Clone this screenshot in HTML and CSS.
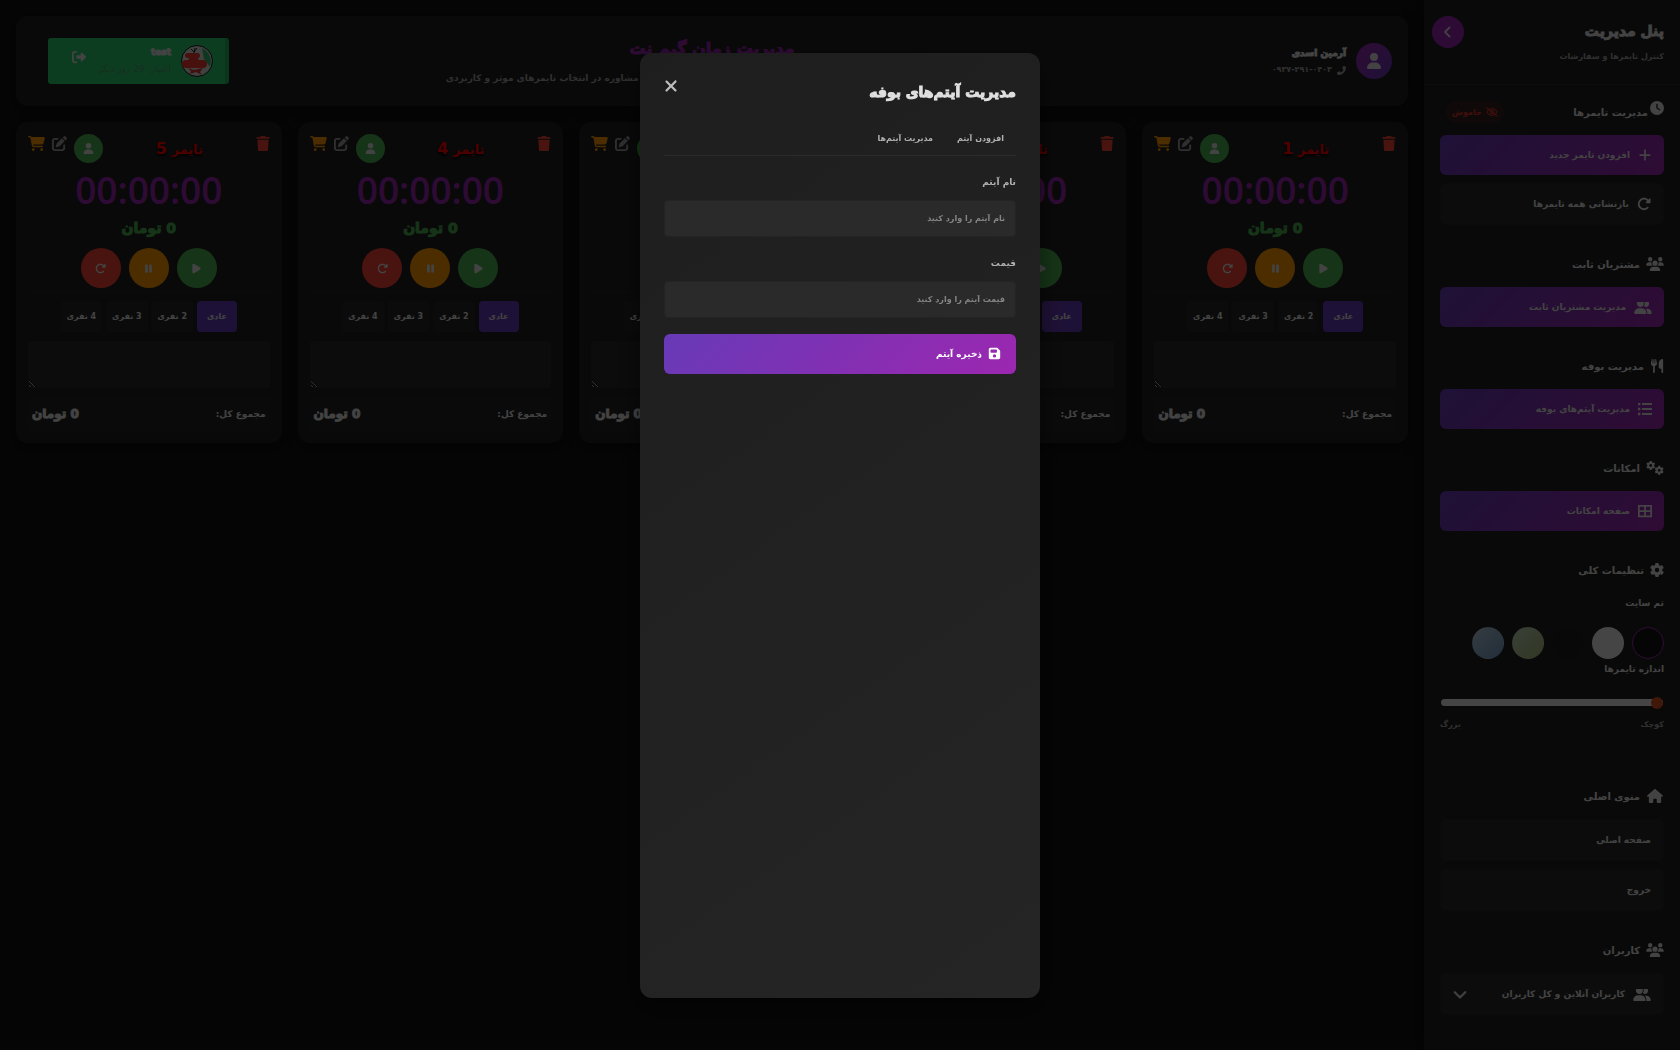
FILE: index.html
```html
<!DOCTYPE html>
<html lang="fa" dir="rtl">
<head>
    <meta charset="UTF-8">
    <meta name="viewport" content="width=device-width, initial-scale=1.0">
    <title>مدیریت زمان گیم نت</title>
    <link rel="stylesheet" href="styles.css">
</head>
<body>
    <svg class="sprite" aria-hidden="true">
        <symbol id="i-plus" viewBox="0 0 448 512"><path d="M256 80c0-17.7-14.3-32-32-32s-32 14.3-32 32V224H48c-17.7 0-32 14.3-32 32s14.3 32 32 32H192V432c0 17.7 14.3 32 32 32s32-14.3 32-32V288H400c17.7 0 32-14.3 32-32s-14.3-32-32-32H256V80z"/></symbol>
        <symbol id="i-trash" viewBox="0 0 448 512"><path d="M135.2 17.7L128 32H32C14.3 32 0 46.3 0 64S14.3 96 32 96H416c17.7 0 32-14.3 32-32s-14.3-32-32-32H320l-7.2-14.3C307.4 6.8 296.3 0 284.2 0H163.8c-12.1 0-23.2 6.8-28.6 17.7zM416 128H32L53.2 467c1.6 25.3 22.6 45 47.9 45H346.9c25.3 0 46.3-19.7 47.9-45L416 128z"/></symbol>
        <symbol id="i-cart" viewBox="0 0 576 512"><path d="M0 24C0 10.7 10.7 0 24 0H69.5c22 0 41.5 12.8 50.6 32h411c26.3 0 45.5 25 38.6 50.4l-41 152.3c-8.5 31.4-37 53.3-69.5 53.3H170.7l5.4 28.5c2.2 11.3 12.1 19.5 23.6 19.5H488c13.3 0 24 10.7 24 24s-10.7 24-24 24H199.7c-34.6 0-64.3-24.6-70.7-58.5L77.4 54.5c-.7-3.8-4-6.5-7.9-6.5H24C10.7 48 0 37.3 0 24zM128 464a48 48 0 1 1 96 0 48 48 0 1 1 -96 0zm336-48a48 48 0 1 1 0 96 48 48 0 1 1 0-96z"/></symbol>
        <symbol id="i-user" viewBox="0 0 448 512"><path d="M224 256A128 128 0 1 0 224 0a128 128 0 1 0 0 256zm-45.7 48C79.8 304 0 383.8 0 482.3C0 498.7 13.3 512 29.7 512H418.3c16.4 0 29.7-13.3 29.7-29.7C448 383.8 368.2 304 269.7 304H178.3z"/></symbol>
        <symbol id="i-edit" viewBox="0 0 512 512"><path d="M471.6 21.7c-21.9-21.9-57.3-21.9-79.2 0L362.3 51.7l97.9 97.9 30.1-30.1c21.9-21.9 21.9-57.3 0-79.2L471.6 21.7zm-299.2 220c-6.1 6.1-10.8 13.6-13.5 21.9l-29.6 88.8c-2.9 8.6-.6 18.1 5.8 24.6s15.9 8.7 24.6 5.8l88.8-29.6c8.2-2.7 15.7-7.4 21.9-13.5L437.7 172.3 339.7 74.3 172.4 241.7zM96 64C43 64 0 107 0 160V416c0 53 43 96 96 96H352c53 0 96-43 96-96V320c0-17.7-14.3-32-32-32s-32 14.3-32 32v96c0 17.7-14.3 32-32 32H96c-17.7 0-32-14.3-32-32V160c0-17.7 14.3-32 32-32h96c17.7 0 32-14.3 32-32s-14.3-32-32-32H96z"/></symbol>
        <symbol id="i-play" viewBox="0 0 384 512"><path d="M73 39c-14.8-9.1-33.4-9.4-48.5-.9S0 62.6 0 80V432c0 17.4 9.4 33.4 24.5 41.9s33.7 8.1 48.5-.9L361 297c14.3-8.7 23-24.2 23-41s-8.7-32.2-23-41L73 39z"/></symbol>
        <symbol id="i-pause" viewBox="0 0 320 512"><path d="M48 64C21.5 64 0 85.5 0 112V400c0 26.5 21.5 48 48 48H80c26.5 0 48-21.5 48-48V112c0-26.5-21.5-48-48-48H48zm192 0c-26.5 0-48 21.5-48 48V400c0 26.5 21.5 48 48 48h32c26.5 0 48-21.5 48-48V112c0-26.5-21.5-48-48-48H240z"/></symbol>
        <symbol id="i-redo" viewBox="0 0 512 512"><path d="M463.5 224H472c13.3 0 24-10.7 24-24V72c0-9.7-5.8-18.5-14.8-22.2s-19.3-1.7-26.2 5.2L413.4 96.6c-87.6-86.5-228.7-86.2-315.8 1c-87.5 87.5-87.5 229.3 0 316.8s229.3 87.5 316.8 0c12.5-12.5 12.5-32.8 0-45.3s-32.8-12.5-45.3 0c-62.5 62.5-163.8 62.5-226.3 0s-62.5-163.8 0-226.3c62.2-62.2 162.7-62.5 225.3-1L327 183c-6.9 6.9-8.9 17.2-5.2 26.2s12.5 14.8 22.2 14.8H463.5z"/></symbol>
        <symbol id="i-clock" viewBox="0 0 512 512"><path d="M256 0a256 256 0 1 1 0 512A256 256 0 1 1 256 0zM232 120V256c0 8 4 15.5 10.7 20l96 64c11 7.4 25.9 4.4 33.3-6.7s4.4-25.9-6.7-33.3L280 243.2V120c0-13.3-10.7-24-24-24s-24 10.7-24 24z"/></symbol>
        <symbol id="i-close" viewBox="0 0 384 512"><path d="M342.6 150.6c12.5-12.5 12.5-32.8 0-45.3s-32.8-12.5-45.3 0L192 210.7 86.6 105.4c-12.5-12.5-32.8-12.5-45.3 0s-12.5 32.8 0 45.3L146.7 256 41.4 361.4c-12.5 12.5-12.5 32.8 0 45.3s32.8 12.5 45.3 0L192 301.3 297.4 406.6c12.5 12.5 32.8 12.5 45.3 0s12.5-32.8 0-45.3L237.3 256 342.6 150.6z"/></symbol>
        <symbol id="i-left" viewBox="0 0 320 512"><path d="M9.4 233.4c-12.5 12.5-12.5 32.8 0 45.3l192 192c12.5 12.5 32.8 12.5 45.3 0s12.5-32.8 0-45.3L77.3 256 246.6 86.6c12.5-12.5 12.5-32.8 0-45.3s-32.8-12.5-45.3 0l-192 192z" stroke="currentColor" stroke-width="20"/></symbol>
        <symbol id="i-down" viewBox="0 0 512 512"><path d="M233.4 406.6c12.5 12.5 32.8 12.5 45.3 0l192-192c12.5-12.5 12.5-32.8 0-45.3s-32.8-12.5-45.3 0L256 338.7 86.6 169.4c-12.5-12.5-32.8-12.5-45.3 0s-12.5 32.8 0 45.3l192 192z" stroke="currentColor" stroke-width="20"/></symbol>
        <symbol id="i-users" viewBox="0 0 640 512"><path d="M144 0a80 80 0 1 1 0 160A80 80 0 1 1 144 0zM512 0a80 80 0 1 1 0 160A80 80 0 1 1 512 0zM0 298.7C0 239.8 47.8 192 106.7 192h42.7c15.9 0 31 3.5 44.6 9.7c-1.3 7.2-1.9 14.7-1.9 22.3c0 38.2 16.8 72.5 43.3 96H21.3C9.6 320 0 310.4 0 298.7zM405.3 320c26.6-23.5 43.3-57.8 43.3-96c0-7.6-.7-15-1.9-22.3c13.6-6.3 28.7-9.7 44.6-9.7h42.7C592.2 192 640 239.8 640 298.7c0 11.8-9.6 21.3-21.3 21.3H405.3zM224 224a96 96 0 1 1 192 0 96 96 0 1 1 -192 0zM128 485.3C128 411.7 187.7 352 261.3 352H378.7C452.3 352 512 411.7 512 485.3c0 14.7-11.9 26.7-26.7 26.7H154.7c-14.7 0-26.7-11.9-26.7-26.7z"/></symbol>
        <symbol id="i-group" viewBox="0 0 640 512"><path d="M96 128a128 128 0 0 1 14-58h228a128 128 0 1 1-242 58zM0 482.3C0 383.8 79.8 304 178.3 304h91.4C368.2 304 448 383.8 448 482.3c0 16.4-13.3 29.7-29.7 29.7H29.7C13.3 512 0 498.7 0 482.3zM609.3 512H471.4c5.4-9.4 8.6-20.3 8.6-32v-8c0-60.7-27.1-115.2-69.8-151.8c2.4-.1 4.7-.2 7.1-.2h61.4C567.8 320 640 392.2 640 481.3c0 17-13.8 30.7-30.7 30.7zM432 256c-31 0-59-12.6-79.3-32.9C372.4 196.5 384 163.6 384 128c0-20-4-40-12-58h156c10 17 16 37 16 58c0 66-50 128-112 128z"/></symbol>
        <symbol id="i-gear" viewBox="0 0 512 512"><path id="gear" d="M495.9 166.6c3.2 8.7 .5 18.4-6.4 24.6l-43.3 39.4c1.1 8.3 1.7 16.8 1.7 25.4s-.6 17.1-1.7 25.4l43.3 39.4c6.9 6.2 9.6 15.9 6.4 24.6c-4.4 11.9-9.7 23.3-15.8 34.3l-4.7 8.1c-6.6 11-14 21.4-22.1 31.2c-5.9 7.2-15.7 9.6-24.5 6.8l-55.7-17.7c-13.4 10.3-28.2 18.9-44 25.4l-12.5 57.1c-2 9.1-9 16.3-18.2 17.8c-13.8 2.3-28 3.5-42.5 3.5s-28.7-1.2-42.5-3.5c-9.2-1.5-16.2-8.7-18.2-17.8l-12.5-57.1c-15.8-6.5-30.6-15.1-44-25.4L83.1 425.9c-8.8 2.8-18.6 .3-24.5-6.8c-8.1-9.8-15.5-20.2-22.1-31.2l-4.7-8.1c-6.1-11-11.4-22.4-15.8-34.3c-3.2-8.7-.5-18.4 6.4-24.6l43.3-39.4C64.6 273.1 64 264.6 64 256s.6-17.1 1.7-25.4L22.4 191.2c-6.9-6.2-9.6-15.9-6.4-24.6c4.4-11.9 9.7-23.3 15.8-34.3l4.7-8.1c6.6-11 14-21.4 22.1-31.2c5.9-7.2 15.7-9.6 24.5-6.8l55.7 17.7c13.4-10.3 28.2-18.9 44-25.4l12.5-57.1c2-9.1 9-16.3 18.2-17.8C227.3 1.2 241.5 0 256 0s28.7 1.2 42.5 3.5c9.2 1.5 16.2 8.7 18.2 17.8l12.5 57.1c15.8 6.5 30.6 15.1 44 25.4l55.7-17.7c8.8-2.8 18.6-.3 24.5 6.8c8.1 9.8 15.5 20.2 22.1 31.2l4.7 8.1c6.1 11 11.4 22.4 15.8 34.3zM256 336a80 80 0 1 0 0-160 80 80 0 1 0 0 160z"/></symbol>
        <symbol id="i-gears" viewBox="0 0 640 512"><use href="#gear" transform="scale(.64)"/><use href="#gear" transform="translate(306 176) scale(.65)"/></symbol>
        <symbol id="i-home" viewBox="0 0 576 512"><path d="M575.8 255.5c0 18-15 32.1-32 32.1h-32l.7 160.2c0 2.7-.2 5.4-.5 8.1V472c0 22.1-17.9 40-40 40H392c-22.1 0-40-17.9-40-40V384c0-17.7-14.3-32-32-32H256c-17.7 0-32 14.3-32 32v88c0 22.1-17.9 40-40 40H104c-22.1 0-40-17.9-40-40V287.6H32c-18 0-32-14-32-32.1c0-9 3-17 10-24L266.4 8c7-7 15-8 22-8s15 2 21 7L564.8 231.5c8 7 12 15 11 24z"/></symbol>
        <symbol id="i-food" viewBox="0 0 448 512"><path d="M416 0C400 0 288 32 288 176V288c0 35.3 28.7 64 64 64h32V480c0 17.7 14.3 32 32 32s32-14.3 32-32V32c0-17.7-14.3-32-32-32zM64 16C64 7.8 57.9 1 49.7 .1S34.2 4.6 32.4 12.5L2.1 148.8C.7 155.1 0 161.5 0 167.9c0 45.9 35.1 83.6 80 87.7V480c0 17.7 14.3 32 32 32s32-14.3 32-32V255.6c44.9-4.1 80-41.8 80-87.7c0-6.4-.7-12.8-2.1-19.1L191.6 12.5c-1.8-8-9.3-13.3-17.4-12.4S160 7.8 160 16V150.2c0 5.4-4.4 9.8-9.8 9.8c-5.1 0-9.3-3.9-9.8-9L127.9 14.6C127.2 6.3 120.3 0 112 0s-15.2 6.3-15.9 14.6L83.7 151c-.5 5.1-4.7 9-9.8 9c-5.4 0-9.8-4.4-9.8-9.8V16z"/></symbol>
        <symbol id="i-list" viewBox="0 0 512 512"><path d="M0 32h88v88H0zM0 212h88v88H0zM0 392h88v88H0zM146 40h366v72H146zM146 220h366v72H146zM146 400h366v72H146z"/></symbol>
        <symbol id="i-grid" viewBox="0 0 512 512"><path d="M448 96V224H288V96H448zm0 192V416H288V288H448zM224 224H64V96H224V224zM64 288H224V416H64V288zM0 32V480H512V32z" fill-rule="evenodd"/></symbol>
        <symbol id="i-save" viewBox="0 0 448 512"><path d="M64 32C28.7 32 0 60.7 0 96V416c0 35.3 28.7 64 64 64H384c35.3 0 64-28.7 64-64V173.3c0-17-6.7-33.3-18.7-45.3L352 50.7C340 38.7 323.7 32 306.7 32H64zm0 96c0-17.7 14.3-32 32-32H288c17.7 0 32 14.3 32 32v64c0 17.7-14.3 32-32 32H96c-17.7 0-32-14.3-32-32V128zM224 288a64 64 0 1 1 0 128 64 64 0 1 1 0-128z"/></symbol>
        <symbol id="i-phone" viewBox="0 0 512 512"><path transform="translate(512 0) scale(-1 1)" d="M164.9 24.6c-7.7-18.6-28-28.5-47.4-23.2l-88 24C12.1 30.2 0 46 0 64C0 311.4 200.6 512 448 512c18 0 33.8-12.1 38.6-29.5l24-88c5.3-19.4-4.6-39.7-23.2-47.4l-96-40c-16.3-6.8-35.2-2.1-46.3 11.6L304.7 368C234.3 334.7 177.3 277.7 144 207.3L193.3 167c13.7-11.2 18.4-30 11.6-46.3l-40-96z"/></symbol>
        <symbol id="i-logout" viewBox="0 0 512 512"><path d="M377.9 105.9L500.7 228.7c7.2 7.2 11.3 17.1 11.3 27.3s-4.1 20.1-11.3 27.3L377.9 406.1c-6.4 6.4-15 9.9-24 9.9c-18.7 0-33.9-15.2-33.9-33.9l0-62.1-128 0c-17.7 0-32-14.3-32-32l0-64c0-17.7 14.3-32 32-32l128 0 0-62.1c0-18.7 15.2-33.9 33.9-33.9c9 0 17.6 3.6 24 9.9zM160 96L96 96c-17.7 0-32 14.3-32 32l0 256c0 17.7 14.3 32 32 32l64 0c17.7 0 32 14.3 32 32s-14.3 32-32 32l-64 0c-53 0-96-43-96-96L0 128C0 75 43 32 96 32l64 0c17.7 0 32 14.3 32 32s-14.3 32-32 32z"/></symbol>
        <symbol id="i-eye" viewBox="0 0 640 512"><g fill="none" stroke="currentColor" stroke-width="54" stroke-linecap="round"><path d="M60 256C130 120 230 70 320 70s190 50 260 186C510 392 410 442 320 442S130 392 60 256z"/><circle cx="320" cy="256" r="92"/><path d="M35 35L605 477"/></g></symbol>
    </svg>

    <aside class="sidebar">
        <div class="side-head">
            <div>
                <h2>پنل مدیریت</h2>
                <p>کنترل تایمرها و سفارشات</p>
            </div>
            <button class="collapse" aria-label="بستن پنل"><svg class="icon s12"><use href="#i-left"/></svg></button>
        </div>

        <section class="side-section">
            <h3 class="tight"><svg class="icon s14"><use href="#i-clock"/></svg>مدیریت تایمرها
                <span class="badge"><svg class="icon s12"><use href="#i-eye"/></svg>خاموش</span>
            </h3>
            <button class="btn primary"><svg class="icon s14 narrow"><use href="#i-plus"/></svg>افزودن تایمر جدید</button>
            <button class="btn ghost"><svg class="icon s14 narrow"><use href="#i-redo"/></svg>بازنشانی همه تایمرها</button>
        </section>

        <section class="side-section">
            <h3><svg class="icon s14"><use href="#i-users"/></svg>مشتریان ثابت</h3>
            <button class="btn primary"><svg class="icon s14"><use href="#i-group"/></svg>مدیریت مشتریان ثابت</button>
        </section>

        <section class="side-section">
            <h3><svg class="icon s14 narrow"><use href="#i-food"/></svg>مدیریت بوفه</h3>
            <button class="btn primary"><svg class="icon s14 narrow"><use href="#i-list"/></svg>مدیریت آیتم‌های بوفه</button>
        </section>

        <section class="side-section">
            <h3><svg class="icon s14"><use href="#i-gears"/></svg>امکانات</h3>
            <button class="btn primary"><svg class="icon s14 narrow"><use href="#i-grid"/></svg>صفحه امکانات</button>
        </section>

        <section class="side-section settings">
            <h3><svg class="icon s14 narrow"><use href="#i-gear"/></svg>تنظیمات کلی</h3>
            <h4>تم سایت</h4>
            <div class="themes">
                <button class="theme dark active" aria-label="تیره"></button>
                <button class="theme light" aria-label="روشن"></button>
                <button class="theme black" aria-label="مشکی"></button>
                <button class="theme green" aria-label="سبز"></button>
                <button class="theme blue" aria-label="آبی"></button>
            </div>
            <label class="size-label" for="size">اندازه تایمرها</label>
            <input type="range" id="size" min="1" max="5" value="1">
            <div class="range-ends"><span>کوچک</span><span>بزرگ</span></div>
        </section>

        <section class="side-section">
            <h3><svg class="icon s14"><use href="#i-home"/></svg>منوی اصلی</h3>
            <a class="btn ghost" href="#">صفحه اصلی</a>
            <a class="btn ghost" href="#">خروج</a>
        </section>

        <section class="side-section">
            <h3><svg class="icon s14"><use href="#i-users"/></svg>کاربران</h3>
            <button class="btn ghost"><svg class="icon s14"><use href="#i-group"/></svg>کاربران آنلاین و کل کاربران<svg class="icon s14 narrow arrow"><use href="#i-down"/></svg></button>
        </section>
    </aside>

    <main class="main">
        <header class="topbar">
            <div class="owner">
                <span class="owner-pic"><svg class="icon s16"><use href="#i-user"/></svg></span>
                <div>
                    <strong>آرمین اسدی</strong>
                    <p><svg class="icon s9"><use href="#i-phone"/></svg><span dir="ltr">۰۹۳۷-۲۹۱-۰۴۰۳</span></p>
                </div>
            </div>
            <div class="brand">
                <h1>مدیریت زمان گیم نت</h1>
                <p>طراحی سایت و نرم افزار، پشتیبانی فنی، راه اندازی سیستم گیم نت و ارائه مشاوره در انتخاب تایمرهای موثر و کاربردی</p>
            </div>
            <div class="account">
                <svg class="account-pic" viewBox="0 0 32 32">
                    <circle cx="16" cy="16" r="15.5" fill="#d6dcd8" stroke="#111" stroke-width="1"/>
                    <path d="M21 3q8 4 9 13l-1 6-6-8z" fill="#35b56d"/>
                    <rect x="4" y="8" width="15" height="5" rx="2.5" fill="#f03a30"/>
                    <path d="M8 12h9l1 5H7z" fill="#e8382e"/>
                    <rect x="1" y="15" width="25" height="8" rx="4" fill="#f03a30"/>
                    <path d="M7 23l6 2 9-2-3 4 2 3-6-3-6 2 1-3z" fill="#d9362d"/>
                    <path d="M10 4l3 3 3-4M14 3l-1 5" stroke="#222" fill="none"/>
                </svg>
                <div>
                    <strong>test</strong>
                    <p>اعتبار: 29 روز دیگر</p>
                </div>
                <button class="logout" aria-label="خروج"><svg class="icon s14 narrow"><use href="#i-logout"/></svg></button>
            </div>
        </header>

        <div class="timers" id="timers"></div>
    </main>

    <div class="overlay">
        <div class="modal" role="dialog" aria-labelledby="modalTitle">
            <div class="modal-head">
                <h2 id="modalTitle">مدیریت آیتم‌های بوفه</h2>
                <button class="close" aria-label="بستن"><svg class="icon s18"><use href="#i-close"/></svg></button>
            </div>
            <div class="modal-tabs">
                <button>افزودن آیتم</button>
                <button>مدیریت آیتم‌ها</button>
            </div>
            <form>
                <label for="itemName">نام آیتم</label>
                <input type="text" id="itemName" placeholder="نام آیتم را وارد کنید">
                <label for="itemPrice">قیمت</label>
                <input type="text" id="itemPrice" placeholder="قیمت آیتم را وارد کنید">
                <button type="button" class="btn primary"><svg class="icon s13"><use href="#i-save"/></svg>ذخیره آیتم</button>
            </form>
        </div>
    </div>

    <script>
        const timers = document.getElementById("timers");
        const modes = ["عادی", "2 نفری", "3 نفری", "4 نفری"];
        const icon = (name, size) => `<svg class="icon s${size}"><use href="#i-${name}"/></svg>`;

        for (let n = 1; n <= 5; n++) {
            timers.innerHTML += `
                <article class="timer">
                    <div class="timer-head">
                        <button class="trash" aria-label="حذف">${icon("trash", 15)}</button>
                        <h3>تایمر <span>${n}</span></h3>
                        <div class="tools">
                            <button class="customer" aria-label="مشتری">${icon("user", 11)}</button>
                            <button class="edit" aria-label="ویرایش">${icon("edit", 15)}</button>
                            <button class="cart" aria-label="سفارش">${icon("cart", 15)}</button>
                        </div>
                    </div>
                    <div class="clock" dir="ltr">00:00:00</div>
                    <div class="price">0 تومان</div>
                    <div class="controls">
                        <button class="play" aria-label="شروع">${icon("play", 11)}</button>
                        <button class="pause" aria-label="توقف">${icon("pause", 11)}</button>
                        <button class="reset" aria-label="بازنشانی">${icon("redo", 11)}</button>
                    </div>
                    <div class="modes">${modes.map((m, i) => `<button class="${i === 0 ? "active" : ""}">${m}</button>`).join("")}</div>
                    <textarea aria-label="توضیحات"></textarea>
                    <div class="total"><span>مجموع کل:</span><strong>0 تومان</strong></div>
                </article>`;
        }
    </script>
</body>
</html>
```

FILE: styles.css
```css
* {
    box-sizing: border-box;
    margin: 0;
    padding: 0;
}
:root {
    --purple: #9c27b0;
    --violet: #673ab7;
    --panel: linear-gradient(145deg, #1e1e1e, #252525);
    --field: #2a2a2a;
    --text: #e0e0e0;
    --muted: #a0a0a0;
}
body {
    display: flex;
    height: 100vh;
    overflow: hidden;
    background: #121212;
    color: var(--text);
    font-family: "DejaVu Sans", sans-serif;
    font-weight: bold;
    font-size: 10px;
}
h1, h2, strong, .price {
    -webkit-text-stroke: 1px currentColor;
}
button, input, textarea {
    font: inherit;
    color: inherit;
    border: none;
    background: none;
}
button {
    cursor: pointer;
}
.sprite {
    position: absolute;
    width: 0;
    height: 0;
}
.icon {
    display: block;
    flex: none;
    fill: currentColor;
}
.s9 { width: 9px; height: 9px; }
.s11 { width: 11px; height: 11px; }
.s12 { width: 12px; height: 12px; }
.s13 { width: 13px; height: 13px; }
.s14 { width: 18px; height: 14px; }
.s15 { width: 17px; height: 15px; }
.s16 { width: 16px; height: 16px; }
.s18 { width: 14px; height: 18px; }
.narrow { width: 14px; }

/* sidebar */
.sidebar {
    flex: 0 0 256px;
    background: #212121;
    box-shadow: 0 0 15px rgba(0, 0, 0, 0.5);
    padding-bottom: 16px;
    overflow: hidden;
}
.side-head {
    display: flex;
    justify-content: space-between;
    padding: 16px 16px 16px 8px;
    margin-bottom: 16px;
    border-bottom: 1px solid #292929;
}
.side-head h2 {
    font-size: 14px;
    line-height: 30px;
}
.side-head p {
    font-size: 8px;
    line-height: 22px;
    color: var(--muted);
}
.collapse {
    display: grid;
    place-items: center;
    width: 32px;
    height: 32px;
    border-radius: 50%;
    background: var(--purple);
}
.side-section {
    display: flex;
    flex-direction: column;
    gap: 8px;
    padding: 0 16px;
    margin-bottom: 28px;
}
.side-section h3 {
    display: flex;
    align-items: center;
    gap: 6px;
    height: 22px;
    margin-bottom: 4px;
    font-size: 10px;
}
.side-section h3.tight {
    gap: 2px;
}
.tight > .icon {
    width: 14px;
    align-self: flex-start;
}
.badge {
    display: flex;
    align-items: center;
    gap: 4px;
    height: 22px;
    margin-right: auto;
    margin-left: 6px;
    padding: 0 6px;
    border-radius: 11px;
    background: #361f1e;
    color: #d8352a;
    font-size: 8px;
}
.btn {
    display: flex;
    align-items: center;
    gap: 8px;
    width: 100%;
    height: 40px;
    padding: 0 12px;
    border-radius: 6px;
    font-size: 9px;
    color: var(--text);
    text-decoration: none;
}
.btn.primary {
    background: linear-gradient(135deg, var(--violet), var(--purple));
}
.btn.ghost {
    height: 42px;
    background: var(--field);
    border: 1px solid #262626;
}
.arrow {
    margin-right: auto;
}
.settings {
    gap: 0;
    margin-bottom: 50px;
}
.settings h3 {
    margin-bottom: 12px;
}
.settings h4 {
    font-size: 9px;
    line-height: 20px;
    margin-bottom: 14px;
}
.themes {
    display: flex;
    gap: 8px;
}
.theme {
    width: 32px;
    height: 32px;
    border-radius: 50%;
    border: 1px solid transparent;
}
.theme.dark { background: #121212; }
.theme.light { background: #e8e8e8; }
.theme.black { background: #1b1b1b; }
.theme.green { background: linear-gradient(135deg, #bcd6b8, #a8b878); }
.theme.blue { background: linear-gradient(135deg, #b4c8d8, #6f9cc4); }
.theme.active {
    border-color: var(--purple);
}
.size-label {
    font-size: 9px;
    line-height: 20px;
    margin-bottom: 17px;
}
input[type="range"] {
    appearance: none;
    width: 100%;
    height: 12px;
}
input[type="range"]::-webkit-slider-runnable-track {
    height: 7px;
    margin: 0 1px;
    border-radius: 4px;
    background: #e8e8e8;
}
input[type="range"]::-webkit-slider-thumb {
    appearance: none;
    width: 12px;
    height: 12px;
    margin-top: -2px;
    border-radius: 50%;
    background: #d84e1b;
}
.range-ends {
    display: flex;
    justify-content: space-between;
    margin-top: 7px;
    font-size: 8px;
    line-height: 20px;
    color: var(--muted);
}

/* top bar */
.main {
    flex: 1;
    padding: 16px;
}
.topbar {
    display: grid;
    grid-template-columns: 1fr auto 1fr;
    align-items: center;
    padding: 16px;
    margin-bottom: 16px;
    border-radius: 12px;
    background: #212121;
    box-shadow: 0 4px 12px rgba(0, 0, 0, 0.4);
}
.owner {
    display: flex;
    align-items: center;
    gap: 10px;
}
.owner-pic {
    display: grid;
    place-items: center;
    width: 36px;
    height: 36px;
    border-radius: 50%;
    background: linear-gradient(135deg, var(--purple), var(--violet));
}
.owner strong {
    display: block;
    font-size: 9px;
    line-height: 18px;
}
.owner p {
    display: flex;
    align-items: center;
    gap: 5px;
    font-size: 8px;
    line-height: 16px;
    color: var(--muted);
}
.brand {
    text-align: center;
}
.brand h1 {
    font-size: 16px;
    line-height: 34px;
    color: var(--purple);
}
.brand p {
    font-size: 9px;
    line-height: 24px;
    color: var(--muted);
}
.account {
    display: flex;
    align-items: center;
    justify-self: end;
    gap: 10px;
    min-width: 181px;
    height: 46px;
    margin-left: 16px;
    padding: 0 12px 0 24px;
    border-right: 4px solid #27ae60;
    border-radius: 3px;
    background: #2ecc71;
}
.account-pic {
    width: 32px;
    height: 32px;
}
.account strong {
    display: block;
    font-size: 9px;
    line-height: 16px;
}
.account p {
    font-size: 9px;
    font-weight: normal;
    line-height: 18px;
    color: #4a9a6c;
}
.logout {
    margin-right: auto;
    margin-bottom: 8px;
}

/* timers */
.timers {
    display: grid;
    grid-template-columns: repeat(5, 1fr);
    gap: 16px;
}
.timer {
    display: flex;
    flex-direction: column;
    padding: 12px;
    border-radius: 12px;
    background: #202020;
    box-shadow: 0 4px 12px rgba(0, 0, 0, 0.4);
}
.timer-head {
    display: flex;
    justify-content: space-between;
    margin-bottom: 4px;
}
.timer-head h3 {
    font-size: 13px;
    line-height: 29px;
    color: #f00;
    text-shadow: 0 2px 3px #000;
}
.timer-head h3 span {
    font-size: 16px;
}
.trash {
    color: #f44336;
}
.trash, .edit, .cart {
    align-self: flex-start;
    margin-top: 2px;
}
.trash .icon {
    width: 14px;
}
.tools {
    display: flex;
    gap: 7px;
}
.customer {
    display: grid;
    place-items: center;
    width: 29px;
    height: 29px;
    border-radius: 50%;
    background: #4caf50;
}
.edit {
    color: #9e9e9e;
}
.edit .icon {
    width: 15px;
}
.cart {
    color: #ff9800;
}
.clock {
    font-family: "Open Sans", sans-serif;
    font-size: 37px;
    font-weight: 600;
    line-height: 44px;
    text-align: center;
    color: var(--purple);
}
.price {
    margin-bottom: 4px;
    font-size: 14px;
    line-height: 32px;
    text-align: center;
    color: #4caf50;
}
.controls {
    display: flex;
    justify-content: center;
    gap: 8px;
    padding-bottom: 3px;
    border-bottom: 1px solid #262626;
}
.controls button {
    display: grid;
    place-items: center;
    width: 40px;
    height: 40px;
    border-radius: 50%;
}
.play { background: #4caf50; }
.pause { background: #ff9800; }
.reset { background: #f44336; }
.modes {
    display: flex;
    justify-content: center;
    gap: 4px;
    margin: 9px 0;
}
.modes button {
    min-width: 40px;
    height: 31px;
    padding: 0 6px;
    border-radius: 4px;
    background: #262626;
    font-size: 8px;
}
.modes button.active {
    background: var(--violet);
}
.timer textarea {
    height: 47px;
    border-radius: 4px;
    background: #282828;
    resize: vertical;
}
.total {
    display: flex;
    align-items: center;
    justify-content: space-between;
    height: 34px;
    margin-top: 9px;
    padding: 0 4px;
    border-radius: 4px;
    background: #232323;
    font-size: 9px;
}
.total strong {
    font-size: 12px;
}

/* modal */
.overlay {
    position: fixed;
    inset: 0;
    display: flex;
    align-items: center;
    justify-content: center;
    background: rgba(0, 0, 0, 0.7);
}
.modal {
    width: 400px;
    max-width: 95%;
    height: 90vh;
    padding: 24px;
    border-radius: 12px;
    background: var(--panel);
    box-shadow: 0 8px 24px rgba(0, 0, 0, 0.5);
}
.modal-head {
    display: flex;
    align-items: flex-start;
    justify-content: space-between;
    margin-bottom: 16px;
}
.modal-head h2 {
    font-size: 14px;
    line-height: 30px;
}
.close {
    color: #bdbdbd;
}
.modal-tabs {
    display: flex;
    border-bottom: 1px solid #2b2b2b;
    margin-bottom: 16px;
}
.modal-tabs button {
    height: 32px;
    padding: 0 12px;
    font-size: 8px;
    color: #b0b0b0;
}
.modal form {
    display: flex;
    flex-direction: column;
}
.modal label {
    margin-bottom: 8px;
    font-size: 9px;
    line-height: 20px;
    color: #b0b0b0;
}
.modal input {
    height: 37px;
    margin-bottom: 16px;
    padding: 0 10px;
    border: 1px solid #242424;
    border-radius: 4px;
    background: var(--field);
    font-size: 8px;
}
.modal input::placeholder {
    color: #858585;
}
.modal .btn {
    padding: 0 15px;
    gap: 6px;
    color: #fff;
}
```
